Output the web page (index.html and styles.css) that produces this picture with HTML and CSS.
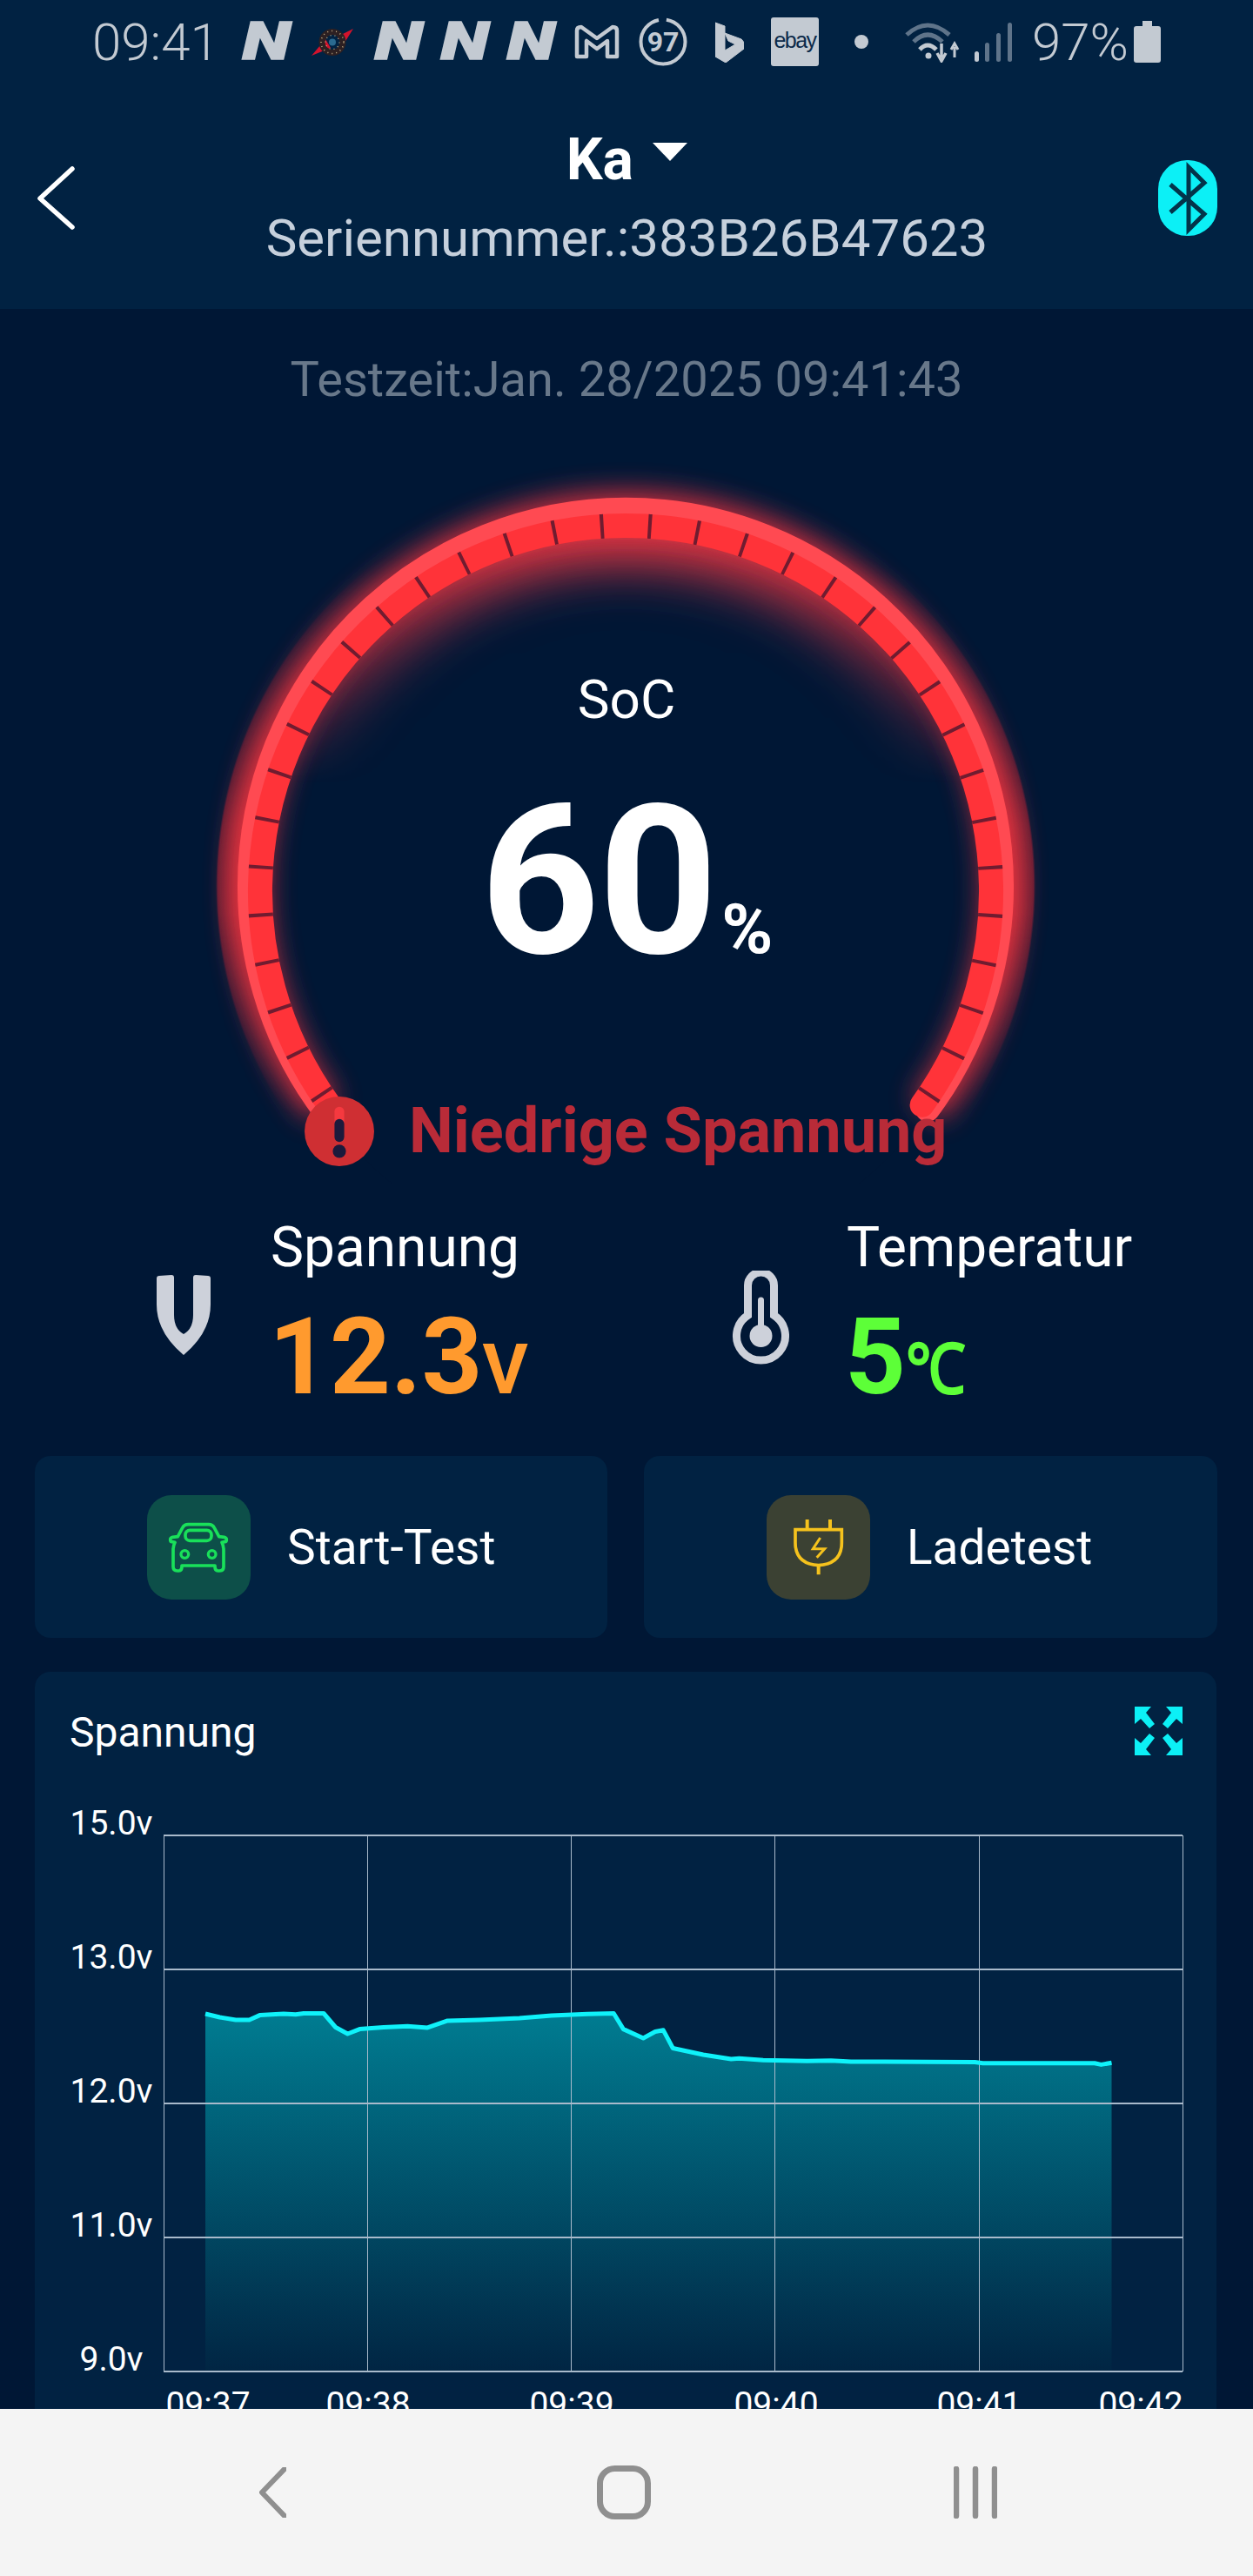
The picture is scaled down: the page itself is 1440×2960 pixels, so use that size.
FILE: index.html
```html
<!DOCTYPE html>
<html lang="en">
<head>
    <meta charset="UTF-8">
    <meta name="viewport" content="width=device-width, initial-scale=1.0">
    <title>Batterie</title>
    <link rel="stylesheet" href="styles.css">
</head>
<body>
    <div class="app">
        <div class="header">
            <div class="status-bar">
                <span class="status-time">09:41</span>
                <span class="n-logo">N</span>
                <svg class="ic-compass" viewBox="0 0 48 31">
                    <path d="M0 31 L16 12 L22 22Z M48 0 L30 9 L36 19Z" fill="#d2132c"/>
                    <circle cx="24" cy="15.500" r="12" fill="none" stroke="#2d2022" stroke-width="7"/>
                    <circle cx="24" cy="15.500" r="13" fill="none" stroke="#c9b48a" stroke-width="1.500" stroke-dasharray="1 4"/>
                    <circle cx="24" cy="15.500" r="8" fill="none" stroke="#c9b48a" stroke-width="1.200" stroke-dasharray="1 4"/>
                    <circle cx="24" cy="15.500" r="4" fill="#2a6a90"/>
                </svg>
                <span class="n-logo">N</span>
                <span class="n-logo">N</span>
                <span class="n-logo">N</span>
                <svg class="ic-mail" viewBox="0 0 52 40">
                    <path d="M3 7 Q3 3 8 3 L26 16 L44 3 Q49 3 49 7 V37 H38 V19 L26 28 L14 19 V37 H3Z" fill="none" stroke="#c3cad2" stroke-width="4.500" stroke-linejoin="round"/>
                </svg>
                <svg class="ic-score" viewBox="0 0 56 56">
                    <circle cx="28" cy="28" r="25.500" fill="none" stroke="#c3cad2" stroke-width="4" stroke-dasharray="150 10" stroke-dashoffset="-4" transform="rotate(-90 28 28)"/>
                    <text x="28" y="39" text-anchor="middle" class="score-text">97</text>
                </svg>
                <svg class="ic-bing" viewBox="0 0 33 47">
                    <path d="M0 1 L11 5 V33 L23 26 L15 22 L11 13 L30 20 Q33 22 33 27 V31 L12 47 L0 40Z" fill="#c3cad2" stroke="#c3cad2" stroke-width="1" stroke-linejoin="round"/>
                </svg>
                <span class="ebay">ebay</span>
                <span class="status-dot"></span>
                <svg class="ic-wifi" viewBox="0 0 63 48">
                    <path d="M2 16 Q26 -6 51 16" fill="none" stroke="#5f748a" stroke-width="5"/>
                    <path d="M10 24 Q26 8 43 24" fill="none" stroke="#5f748a" stroke-width="5"/>
                    <path d="M17 33 Q26 23 36 33" fill="none" stroke="#c3cad2" stroke-width="5"/>
                    <circle cx="27" cy="40" r="3.500" fill="#c3cad2"/>
                    <path d="M42 26 V42 M37 37 L42 46 L47 37" fill="none" stroke="#c3cad2" stroke-width="3.500"/>
                    <path d="M57 42 V30 M53 33 L57 26 L61 33" fill="none" stroke="#c3cad2" stroke-width="3"/>
                </svg>
                <svg class="ic-signal" viewBox="0 0 43 45">
                    <rect x="0" y="33" width="5" height="12" rx="2.500" fill="#c3cad2"/>
                    <rect x="12" y="23" width="5" height="22" rx="2.500" fill="#5f748a"/>
                    <rect x="25" y="12" width="5" height="33" rx="2.500" fill="#5f748a"/>
                    <rect x="38" y="0" width="5" height="45" rx="2.500" fill="#5f748a"/>
                </svg>
                <span class="status-pct">97%</span>
                <svg class="ic-battery" viewBox="0 0 31 48">
                    <path d="M10 0 H21 V6 H28 Q31 6 31 9 V45 Q31 48 28 48 H3 Q0 48 0 45 V9 Q0 6 3 6 H10Z" fill="#c3cad2"/>
                </svg>
            </div>
            <div class="title-bar">
                <svg class="back-icon" viewBox="0 0 45 73">
                    <path d="M41 3 L4 37 L41 70" fill="none" stroke="#fff" stroke-width="5.500" stroke-linecap="round" stroke-linejoin="round"/>
                </svg>
                <div class="title-center">
                    <div class="title-name">Ka <span class="caret"></span></div>
                    <div class="title-serial">Seriennummer.:383B26B47623</div>
                </div>
                <svg class="bt-icon" viewBox="0 0 68 87">
                    <rect width="68" height="87" rx="33" fill="#0cf0f6"/>
                    <path d="M14 28 L53 62 L35 80 V8 L53 26 L14 60" fill="none" stroke="#03344a" stroke-width="5"/>
                </svg>
            </div>
        </div>

        <div class="test-time">Testzeit:Jan. 28/2025 09:41:43</div>

        <div class="gauge">
            <svg class="gauge-bg" viewBox="200 480 1040 880">
                <defs>
                    <filter id="blur16" x="-20%" y="-20%" width="140%" height="140%"><feGaussianBlur stdDeviation="16"/></filter>
                    <filter id="blur30" x="-20%" y="-20%" width="140%" height="140%"><feGaussianBlur stdDeviation="30"/></filter>
                    <radialGradient id="crescent" gradientUnits="userSpaceOnUse" cx="719" cy="1018" r="471">
                        <stop offset="0.93" stop-color="#a82c3a"/>
                        <stop offset="0.995" stop-color="#5e1d33"/>
                        <stop offset="1" stop-color="#5e1d33" stop-opacity="0"/>
                    </radialGradient>
                    <linearGradient id="crescentFade" gradientUnits="userSpaceOnUse" x1="0" y1="640" x2="0" y2="1280">
                        <stop offset="0" stop-color="#000"/>
                        <stop offset="0.48" stop-color="#fff"/>
                        <stop offset="0.64" stop-color="#fff"/>
                        <stop offset="1" stop-color="#000"/>
                    </linearGradient>
                    <linearGradient id="innerFade" gradientUnits="userSpaceOnUse" x1="0" y1="600" x2="0" y2="900">
                        <stop offset="0" stop-color="#fff"/>
                        <stop offset="1" stop-color="#000"/>
                    </linearGradient>
                    <mask id="crescentMask" maskUnits="userSpaceOnUse" x="200" y="480" width="1040" height="880"><rect x="200" y="480" width="1040" height="880" fill="url(#crescentFade)"/></mask>
                    <mask id="innerMask" maskUnits="userSpaceOnUse" x="200" y="480" width="1040" height="880"><rect x="200" y="480" width="1040" height="880" fill="url(#innerFade)"/></mask>
                    <clipPath id="innerClip"><circle cx="719" cy="1024" r="410"/></clipPath>
                </defs>
                <circle cx="719" cy="1018" r="471" fill="url(#crescent)" mask="url(#crescentMask)"/>
                <circle cx="719" cy="1024" r="430" fill="#001735"/>
                <g clip-path="url(#innerClip)"><g mask="url(#innerMask)">
                    <circle cx="719" cy="1024" r="408" fill="none" stroke="#ff3a44" stroke-width="70" filter="url(#blur30)"/>
                </g></g>
                <path d="M372 1275 A432 432 0 1 1 1066 1275" fill="none" stroke="#ff3540" stroke-width="40" filter="url(#blur16)" opacity="0.85"/>
                <path d="M372 1275 A432 432 0 1 1 1066 1275" fill="none" stroke="#ff4a52" stroke-width="28" stroke-linecap="round"/>
                <path d="M378.400 1269.700 A420 420 0 1 1 1059.600 1269.700" fill="none" stroke="#ff3339" stroke-width="28" stroke-linecap="round"/>
                <path d="M378.400 1269.700 A420 420 0 1 1 1059.600 1269.700" fill="none" stroke="#701c30" stroke-width="28" stroke-dasharray="4 50.978" stroke-dashoffset="-13.050"/>
            </svg>
            <div class="gauge-label">SoC</div>
            <div class="gauge-value">60<span class="gauge-unit">%</span></div>
            <div class="alert-row">
                <svg class="alert-icon" viewBox="0 0 79 79">
                    <circle cx="39.500" cy="39.500" r="39.500" fill="#cf2f33"/>
                    <path d="M39.500 17 V29" stroke="#f5393f" stroke-width="11" stroke-linecap="round"/>
                    <path d="M39.500 31 V46" stroke="#1c1a3c" stroke-width="11" stroke-linecap="round"/>
                    <circle cx="39.500" cy="62" r="7.500" fill="#1c1a3c"/>
                </svg>
                <span class="alert-text">Niedrige Spannung</span>
            </div>
        </div>

        <div class="stats">
            <div class="stat">
                <svg class="stat-volt" viewBox="0 0 62 92">
                    <path d="M0 4 Q0 1 3 1 L17 0 Q20 0 20 3 V46 Q20 62 31 68 Q42 62 42 46 V3 Q42 0 45 0 L59 1 Q62 1 62 4 V34 Q62 66 31 92 Q0 66 0 34Z" fill="#cdd1da"/>
                </svg>
                <div>
                    <div class="stat-label">Spannung</div>
                    <div class="stat-value orange">12.3<span class="stat-unit">V</span></div>
                </div>
            </div>
            <div class="stat">
                <svg class="stat-temp" viewBox="0 0 67 108">
                    <path d="M18.500 51.400 V17 a15 15 0 0 1 30 0 V51.400 a28 28 0 1 1 -30 0Z" fill="none" stroke="#cdd1da" stroke-width="9"/>
                    <path d="M33.500 34 V72" stroke="#cdd1da" stroke-width="7" stroke-linecap="round"/>
                    <circle cx="33.500" cy="75" r="13" fill="#cdd1da"/>
                </svg>
                <div>
                    <div class="stat-label">Temperatur</div>
                    <div class="stat-value green">5<span class="stat-unit celsius">℃</span></div>
                </div>
            </div>
        </div>

        <div class="actions">
            <div class="action-card">
                <div class="action-icon car-bg">
                    <svg viewBox="28 52 357 358">
                        <path d="M108 205 Q108 198 116 196 L134 194 L150 164 Q156 152 170 152 H240 Q254 152 260 164 L276 194 L294 196 Q302 198 302 205 Q302 212 296 212 L286 214 Q292 225 292 240 V298 Q292 312 278 312 H272 Q262 312 262 298 V294 H148 V298 Q148 312 138 312 H132 Q118 312 118 298 V240 Q118 225 124 214 L114 212 Q108 212 108 205Z" fill="none" stroke="#19e05a" stroke-width="11" stroke-linejoin="round"/>
                        <rect x="160" y="172" width="90" height="36" rx="16" fill="none" stroke="#19e05a" stroke-width="11"/>
                        <circle cx="158" cy="255" r="13" fill="none" stroke="#19e05a" stroke-width="10"/>
                        <circle cx="252" cy="255" r="13" fill="none" stroke="#19e05a" stroke-width="10"/>
                    </svg>
                </div>
                <span class="action-text">Start-Test</span>
            </div>
            <div class="action-card charge-card">
                <div class="action-icon plug-bg">
                    <svg viewBox="33 52 357 358">
                        <path d="M173 135 V170 M252 135 V170 M212 295 V325" stroke="#f5c21d" stroke-width="12" fill="none"/>
                        <path d="M132 170 H292 V215 Q292 288 212 293 Q132 288 132 215Z" fill="none" stroke="#f5c21d" stroke-width="11"/>
                        <path d="M218 198 L193 236 H233 L206 266" fill="none" stroke="#f5c21d" stroke-width="9"/>
                    </svg>
                </div>
                <span class="action-text">Ladetest</span>
            </div>
        </div>

        <div class="chart-card">
            <div class="chart-head">
                <span class="chart-title">Spannung</span>
                <svg class="expand-icon" viewBox="0 0 55 56">
                    <path d="M0 0 H19 L13 7 L23 20 L17 25 L7 14 L0 20Z" fill="#0cf0f6"/>
                    <path d="M55 0 H36 L42 7 L32 20 L38 25 L48 14 L55 20Z" fill="#0cf0f6"/>
                    <path d="M0 56 H19 L13 49 L23 36 L17 31 L7 42 L0 36Z" fill="#0cf0f6"/>
                    <path d="M55 56 H36 L42 49 L32 36 L38 31 L48 42 L55 36Z" fill="#0cf0f6"/>
                </svg>
            </div>
            <svg class="chart-svg" viewBox="40 2060 1360 720">
                <defs>
                    <linearGradient id="area" x1="0" y1="0" x2="0" y2="1">
                        <stop offset="0" stop-color="#007c91"/>
                        <stop offset="1" stop-color="#012543"/>
                    </linearGradient>
                </defs>
                <path class="area" d="M236 2314 L252.600 2318 L270.900 2321 L286.500 2321 L298.500 2315.600 L326 2314 L339.800 2314.700 L349 2313.500 L372 2313.500 L385.700 2329.500 L399.500 2337 L413.300 2331.600 L440.800 2329.500 L468.400 2328.200 L491.300 2329.900 L514.300 2321.900 L551 2321 L597 2318.900 L633.700 2316 L675 2314.300 L705.300 2313.500 L716.400 2331.600 L739.300 2342 L753 2334.500 L762.300 2332.800 L773.300 2353.500 L808.200 2361 L840.300 2366 L849.500 2365.200 L877 2367.300 L927.600 2368.200 L955 2367.800 L978 2369 L1120.400 2369.400 L1129.600 2370.700 L1258 2370.700 L1265.500 2372.400 L1277.500 2370.300 V2725 H236Z"/>
                <g class="grid-h">
                    <path d="M188 2109 H1359 M188 2263 H1359 M188 2417 H1359 M188 2571 H1359 M188 2725 H1359"/>
                </g>
                <g class="grid-v">
                    <path d="M188.500 2109 V2725 M422.500 2109 V2725 M656.500 2109 V2725 M890.500 2109 V2725 M1125.500 2109 V2725 M1359.500 2109 V2725"/>
                </g>
                <path class="line" d="M236 2314 L252.600 2318 L270.900 2321 L286.500 2321 L298.500 2315.600 L326 2314 L339.800 2314.700 L349 2313.500 L372 2313.500 L385.700 2329.500 L399.500 2337 L413.300 2331.600 L440.800 2329.500 L468.400 2328.200 L491.300 2329.900 L514.300 2321.900 L551 2321 L597 2318.900 L633.700 2316 L675 2314.300 L705.300 2313.500 L716.400 2331.600 L739.300 2342 L753 2334.500 L762.300 2332.800 L773.300 2353.500 L808.200 2361 L840.300 2366 L849.500 2365.200 L877 2367.300 L927.600 2368.200 L955 2367.800 L978 2369 L1120.400 2369.400 L1129.600 2370.700 L1258 2370.700 L1265.500 2372.400 L1277.500 2370.300"/>
                <g class="axis-text">
                    <text x="128" y="2108">15.0v</text>
                    <text x="128" y="2262">13.0v</text>
                    <text x="128" y="2416">12.0v</text>
                    <text x="128" y="2570">11.0v</text>
                    <text x="128" y="2724">9.0v</text>
                    <text x="239" y="2776">09:37</text>
                    <text x="423" y="2776">09:38</text>
                    <text x="657" y="2776">09:39</text>
                    <text x="892" y="2776">09:40</text>
                    <text x="1125" y="2776">09:41</text>
                    <text x="1311" y="2776">09:42</text>
                </g>
            </svg>
        </div>
    </div>

    <div class="nav-bar">
        <svg viewBox="0 0 31 58" class="nav-back">
            <path d="M29 2 L3 29 L29 56" fill="none" stroke="#8f8f8f" stroke-width="6" stroke-linecap="round" stroke-linejoin="round"/>
        </svg>
        <svg viewBox="0 0 62 62" class="nav-home">
            <rect x="3.500" y="3.500" width="55" height="55" rx="17" fill="none" stroke="#8f8f8f" stroke-width="7"/>
        </svg>
        <svg viewBox="0 0 50 60" class="nav-recent">
            <path d="M3 3 V57 M25 3 V57 M47 3 V57" stroke="#8f8f8f" stroke-width="6.500" stroke-linecap="round"/>
        </svg>
    </div>
</body>
</html>
```

FILE: styles.css
```css
body {
    margin: 0;
    padding: 0;
    width: 1440px;
    height: 2960px;
    overflow: hidden;
    font-family: Roboto, sans-serif;
    background-color: #001735;
    color: white;
}

.app {
    height: 2768px;
    overflow: hidden;
}

.header {
    height: 355px;
    background-color: #012242;
    box-sizing: border-box;
}

.status-bar {
    display: flex;
    align-items: center;
    height: 96px;
    padding-left: 106px;
    color: #c3cad2;
}

.status-time {
    width: 140px;
    margin-right: 32px;
    font-size: 60px;
    font-weight: 300;
}

.n-logo {
    display: block;
    width: 56px;
    margin-right: 20px;
    font-size: 60px;
    font-weight: 900;
    font-style: italic;
    line-height: 60px;
    text-align: center;
    transform: scaleX(1.35);
    -webkit-text-stroke: 1.500px #c3cad2;
}

.n-logo:nth-of-type(2) {
    margin-right: 24px;
}

.ic-compass {
    width: 48px;
    height: 31px;
    margin-right: 24px;
}

.ic-mail {
    width: 52px;
    height: 40px;
    margin-left: 2px;
    margin-right: 22px;
}

.ic-score {
    width: 56px;
    height: 56px;
    margin-right: 32px;
}

.score-text {
    font-family: Roboto, sans-serif;
    font-size: 32px;
    font-weight: 700;
    fill: #c3cad2;
}

.ic-bing {
    width: 33px;
    height: 47px;
    margin-right: 31px;
}

.ebay {
    width: 55px;
    height: 56px;
    border-radius: 3px;
    background-color: #c3cad2;
    color: #0c2a4a;
    font-family: "Liberation Sans", sans-serif;
    font-size: 25px;
    line-height: 52px;
    letter-spacing: -1.500px;
    text-align: center;
}

.status-dot {
    width: 16px;
    height: 16px;
    margin-left: 41px;
    border-radius: 50%;
    background-color: #c3cad2;
}

.ic-wifi {
    width: 63px;
    height: 48px;
    margin-left: 42px;
}

.ic-signal {
    width: 43px;
    height: 45px;
    margin-left: 17px;
}

.status-pct {
    width: 117px;
    margin-left: 23px;
    font-size: 60px;
    font-weight: 300;
    white-space: nowrap;
}

.ic-battery {
    width: 31px;
    height: 48px;
}

.title-bar {
    display: grid;
    grid-template-columns: 1fr auto 1fr;
    align-items: center;
    padding: 50px 41px 0 42px;
}

.back-icon {
    width: 45px;
    height: 73px;
}

.title-center {
    text-align: center;
}

.title-name {
    font-size: 66px;
    font-weight: 700;
    line-height: 76px;
}

.caret {
    display: inline-block;
    width: 0;
    height: 0;
    margin-left: 6px;
    border-left: 20px solid transparent;
    border-right: 20px solid transparent;
    border-top: 21px solid white;
    vertical-align: 21px;
}

.title-serial {
    margin-top: 17px;
    color: #c6d0dc;
    font-size: 60px;
    line-height: 70px;
    white-space: nowrap;
}

.bt-icon {
    justify-self: end;
    width: 68px;
    height: 87px;
}

.test-time {
    margin-top: 48px;
    color: #68788a;
    font-size: 56px;
    line-height: 66px;
    text-align: center;
}

/* gauge: the ring is a background drawing, the readout sits on top */
.gauge {
    position: relative;
    height: 880px;
    margin-top: 11px;
    text-align: center;
}

.gauge-bg {
    position: absolute;
    left: 200px;
    top: 0;
    width: 1040px;
    height: 880px;
}

.gauge-label {
    position: relative;
    padding-top: 288px;
    font-size: 62px;
    line-height: 72px;
}

.gauge-value {
    position: relative;
    margin-top: 43px;
    font-size: 240px;
    font-weight: 700;
    line-height: 260px;
    letter-spacing: -2px;
}

.gauge-unit {
    margin-left: 6px;
    font-size: 80px;
    letter-spacing: 0;
}

.alert-row {
    position: relative;
    display: flex;
    align-items: center;
    gap: 40px;
    margin-top: 59px;
    padding-left: 350px;
}

.alert-icon {
    width: 80px;
    height: 80px;
}

.alert-text {
    color: #b92b38;
    font-size: 72px;
    font-weight: 700;
}

.stats {
    display: flex;
    margin-top: 38px;
    padding-left: 180px;
}

.stat {
    display: flex;
    flex: none;
    align-items: center;
    width: 661px;
    gap: 69px;
}

.stat-volt {
    width: 62px;
    height: 92px;
    margin-bottom: 14px;
}

.stat-temp {
    width: 67px;
    height: 108px;
    margin-right: -4px;
    margin-bottom: 8px;
}

.stat-label {
    font-size: 64px;
    line-height: 72px;
}

.stat-value {
    margin-top: 26px;
    margin-left: -2px;
    font-size: 122px;
    font-weight: 700;
    line-height: 128px;
}

.stat-unit {
    font-size: 80px;
}

.celsius {
    display: inline-block;
    transform: scaleX(0.86);
    transform-origin: left;
}

.orange {
    color: #ff9a2e;
}

.green {
    color: #5dff38;
}

.actions {
    display: flex;
    gap: 42px;
    margin: 35px 41px 0 40px;
}

.action-card {
    display: flex;
    align-items: center;
    flex: 0 0 658px;
    height: 209px;
    padding-left: 129px;
    box-sizing: border-box;
    border-radius: 18px;
    background-color: #012242;
}

.charge-card {
    flex-basis: 659px;
    padding-left: 141px;
}

.action-icon {
    width: 119px;
    height: 120px;
    border-radius: 28px;
}

.action-icon svg {
    display: block;
    width: 100%;
    height: 100%;
}

.car-bg {
    background-color: #0d4f49;
}

.plug-bg {
    background-color: #3b4133;
}

.action-text {
    margin-left: 42px;
    font-size: 55px;
}

.chart-card {
    margin: 39px 42px 0 40px;
    height: 900px;
    border-radius: 18px;
    background-color: #012242;
}

.chart-head {
    display: flex;
    align-items: flex-start;
    justify-content: space-between;
    height: 139px;
    padding: 0 39px 0 40px;
}

.chart-title {
    margin-top: 42px;
    font-size: 48px;
    line-height: 56px;
}

.expand-icon {
    width: 55px;
    height: 56px;
    margin-top: 40px;
}

.chart-svg {
    display: block;
    width: 1360px;
    height: 720px;
}

.area {
    fill: url(#area);
}

.grid-h path {
    fill: none;
    stroke: #a9bacb;
    stroke-width: 2;
}

.grid-v path {
    fill: none;
    stroke: #a9bacb;
    stroke-width: 1;
}

.line {
    fill: none;
    stroke: #0ff2fa;
    stroke-width: 5;
    stroke-linejoin: round;
}

.axis-text text {
    fill: white;
    font-family: Roboto, sans-serif;
    font-size: 39px;
    text-anchor: middle;
}

.nav-bar {
    display: grid;
    grid-template-columns: repeat(3, 404px);
    justify-items: center;
    align-items: center;
    height: 192px;
    padding-left: 111px;
    background-color: #f4f4f4;
}

.nav-back {
    width: 31px;
    height: 58px;
}

.nav-home {
    width: 62px;
    height: 62px;
}

.nav-recent {
    width: 50px;
    height: 60px;
}
```
